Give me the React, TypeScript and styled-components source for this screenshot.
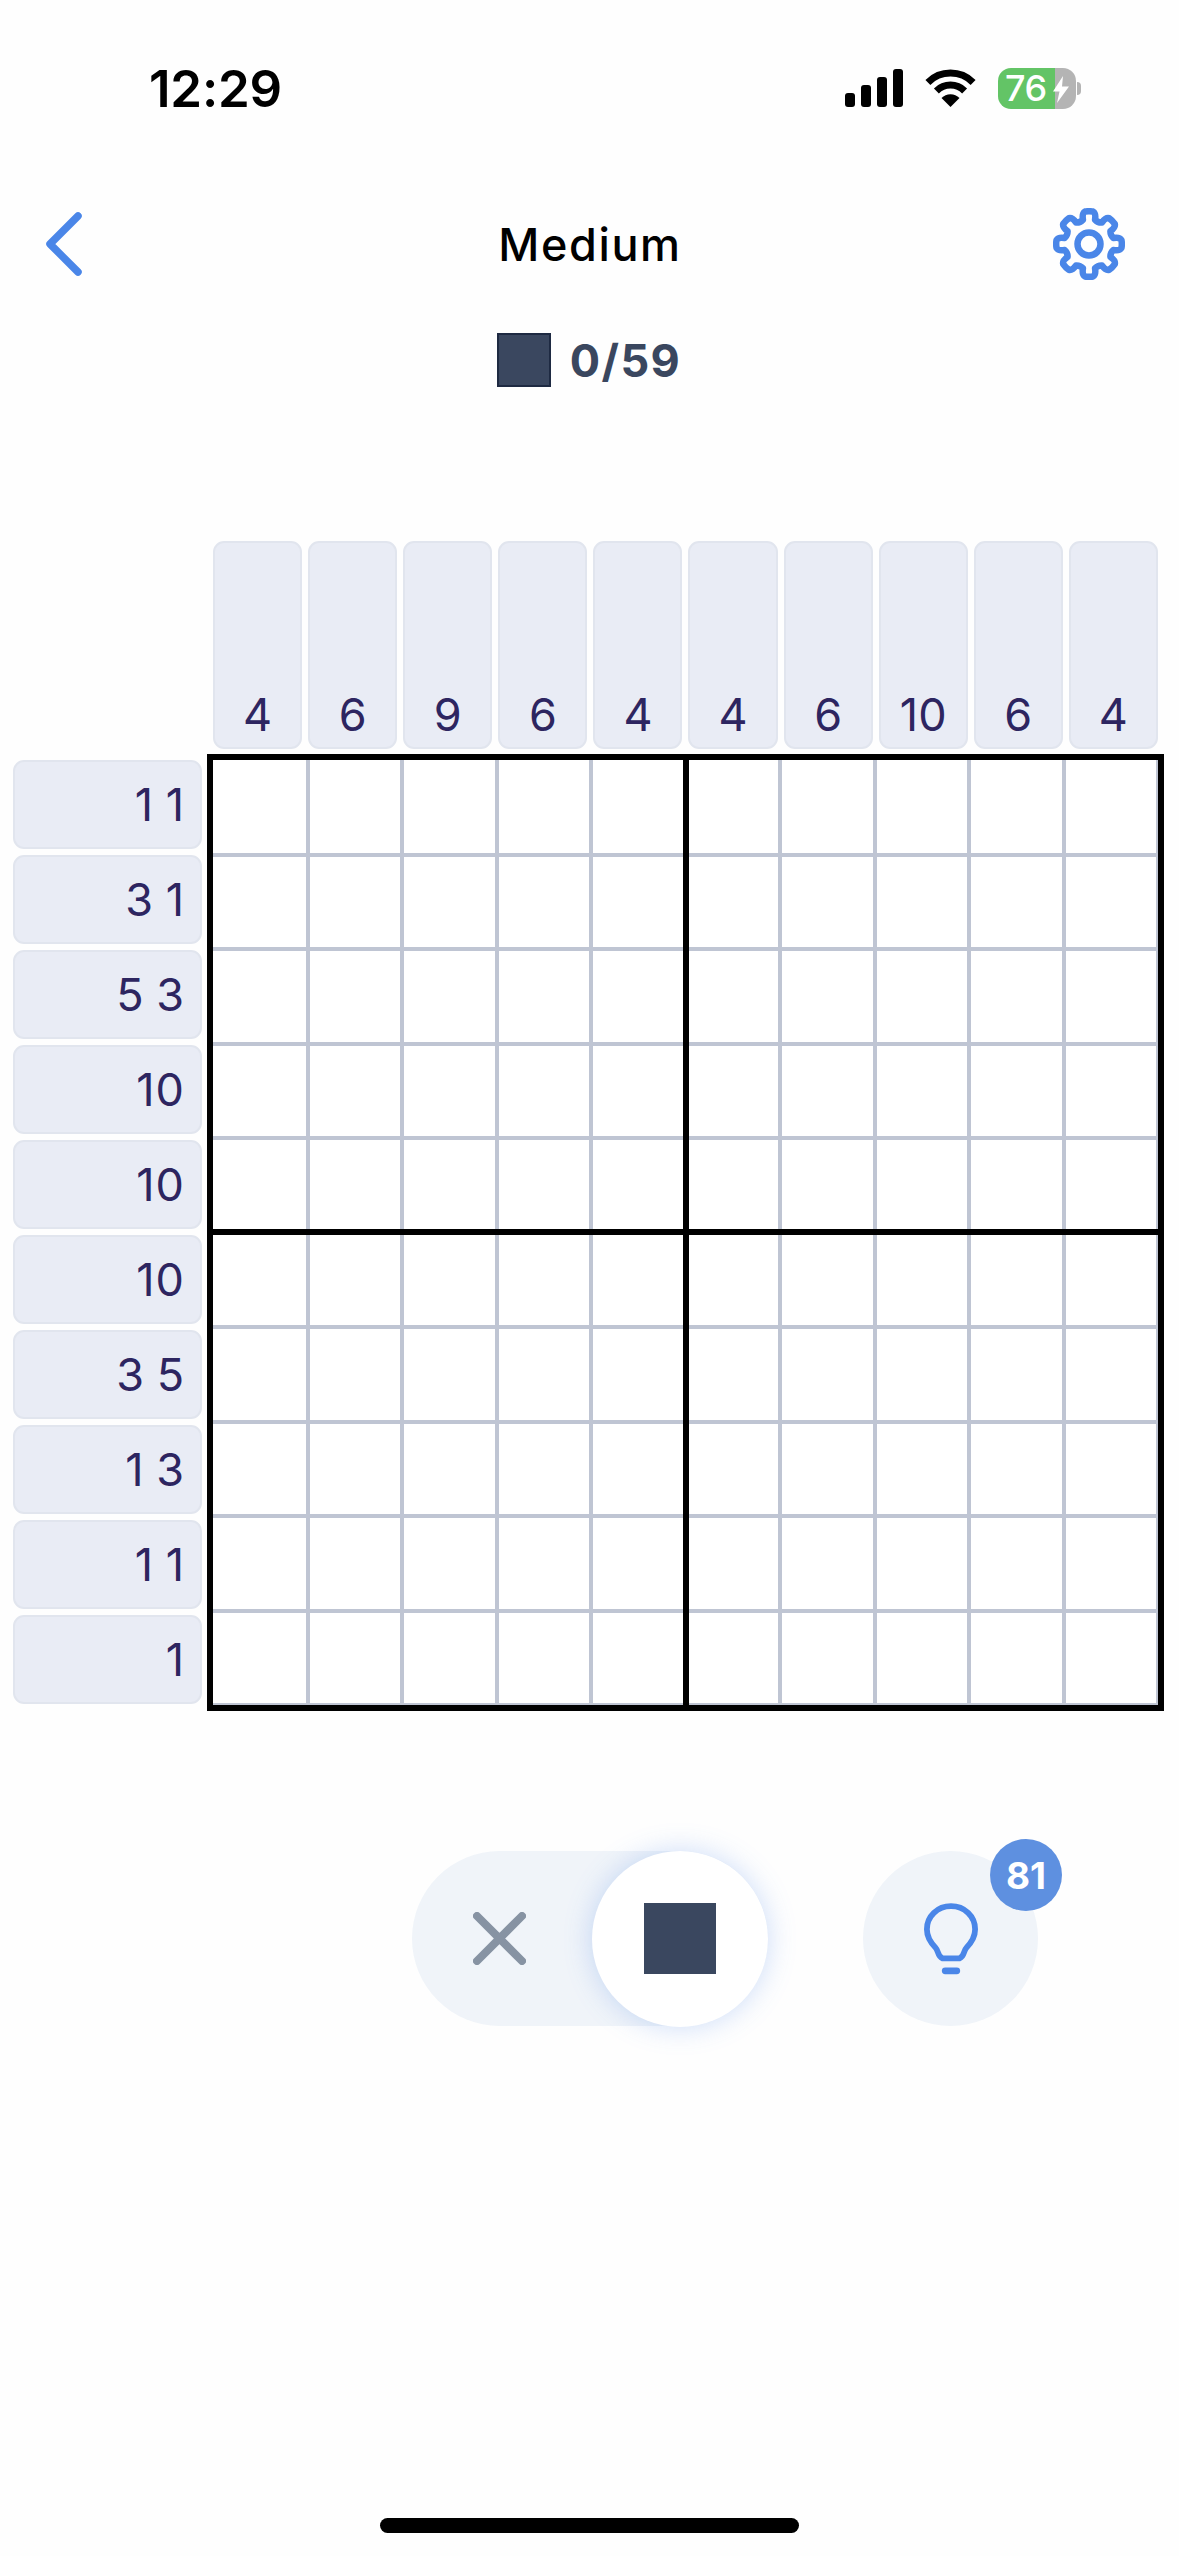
import React from 'react';
import styled, { createGlobalStyle } from 'styled-components';

const GlobalStyle = createGlobalStyle`
  html, body {
    margin: 0;
    padding: 0;
    background: #fff;
  }
  * {
    box-sizing: border-box;
  }
`;

const Page = styled.div`
  width: 1179px;
  height: 2556px;
  display: flex;
  flex-direction: column;
  background: #fefefe;
  font-family: Inter, "Liberation Sans", sans-serif;
  overflow: hidden;
`;

const StatusBar = styled.div`
  height: 64px;
  margin-top: 56px;
  padding: 0 98px 0 149px;
  display: flex;
  align-items: center;
  justify-content: space-between;
`;

const Time = styled.div`
  font-size: 51px;
  font-weight: 600;
  letter-spacing: -0.2px;
  color: #000;
`;

const StatusIcons = styled.div`
  display: flex;
  align-items: center;
  gap: 22px;
`;

const Battery = styled.div`
  position: relative;
  width: 78px;
  height: 41px;
  border-radius: 13px;
  background: linear-gradient(90deg, #63c466 0 57px, #b4b4b4 57px);
  color: #fff;
  font-size: 36px;
  font-weight: 500;
  line-height: 41px;
  padding-left: 7px;
  letter-spacing: -0.5px;
`;

const BatteryWrap = styled.div`
  display: flex;
  align-items: center;
  gap: 1px;
`;

const BatteryNub = styled.div`
  width: 4px;
  height: 13px;
  background: #b4b4b4;
  border-radius: 0 6px 6px 0;
`;

const Bolt = styled.svg`
  position: absolute;
  top: 8px;
  left: 55px;
`;

const NavBar = styled.div`
  height: 88px;
  margin-top: 80px;
  padding: 0 54px 0 45px;
  display: grid;
  grid-template-columns: 1fr auto 1fr;
  align-items: center;
`;

const NavRight = styled.div`
  display: flex;
  justify-content: flex-end;
`;

const Title = styled.div`
  margin-left: 10px;
  font-size: 45px;
  font-weight: 500;
  letter-spacing: 1.6px;
  color: #000;
`;

const Counter = styled.div`
  height: 54px;
  margin-top: 45px;
  padding-right: 1px;
  display: flex;
  align-items: center;
  justify-content: center;
  gap: 19px;
`;

const CounterSwatch = styled.div`
  width: 54px;
  height: 54px;
  background: #3a475f;
  border: 2px solid #1e2a42;
`;

const CounterText = styled.div`
  font-size: 45px;
  font-weight: 700;
  letter-spacing: 1.4px;
  color: #3a475f;
`;

const Puzzle = styled.div`
  margin-top: 154px;
  display: grid;
  grid-template-columns: 207px 957px;
  grid-template-rows: 213px 957px;
`;

const Corner = styled.div``;

const TopClues = styled.div`
  padding: 0 6px 5px 6px;
  display: flex;
  gap: 6px;
`;

const LeftClues = styled.div`
  padding: 6px 5px 7px 13px;
  display: flex;
  flex-direction: column;
  gap: 6px;
`;

const ClueTile = styled.div`
  flex: 1;
  display: flex;
  background: #e9ecf5;
  border: 2px solid #e1e5ee;
  border-radius: 11px;
  color: #2d2560;
  font-size: 45px;
  line-height: 1;
`;

const TopTile = styled(ClueTile)`
  align-items: flex-end;
  justify-content: center;
  padding-bottom: 10px;
`;

const LeftTile = styled(ClueTile)`
  align-items: center;
  justify-content: flex-end;
  padding-right: 15px;
  letter-spacing: 1px;
  word-spacing: -2px;
`;

const Board = styled.div`
  position: relative;
  border: 6px solid #000;
  display: grid;
  grid-template-columns: 96.5px repeat(8, 94.5px) 1fr;
  grid-template-rows: 96.5px repeat(8, 94.5px) 1fr;
  background: #fff;
`;

const Cell = styled.div`
  border-right: 4px solid #bfc5d3;
  border-bottom: 4px solid #bfc5d3;
  &:nth-child(10n) {
    border-right-width: 2px;
  }
  &:nth-child(n + 91) {
    border-bottom-width: 2px;
  }
`;

const VerticalRule = styled.div`
  position: absolute;
  top: 0;
  bottom: 0;
  left: 470px;
  width: 6px;
  background: #000;
`;

const HorizontalRule = styled.div`
  position: absolute;
  left: 0;
  right: 0;
  top: 469px;
  height: 6px;
  background: #000;
`;

const Controls = styled.div`
  margin-top: 140px;
  padding-left: 412px;
  display: flex;
  align-items: center;
  gap: 95px;
`;

const ModeToggle = styled.div`
  position: relative;
  width: 356px;
  height: 175px;
  border-radius: 88px;
  background: #f0f4f9;
  display: flex;
  align-items: center;
  justify-content: space-between;
  padding-left: 61px;
`;

const ToggleThumb = styled.div`
  width: 176px;
  height: 176px;
  border-radius: 50%;
  background: #fff;
  box-shadow: 0 0 28px rgba(74, 134, 232, 0.28);
  display: flex;
  align-items: center;
  justify-content: center;
`;

const ThumbSquare = styled.div`
  width: 72px;
  height: 71px;
  background: #3a475f;
`;

const HintButton = styled.div`
  position: relative;
  width: 175px;
  height: 175px;
  border-radius: 50%;
  background: #f0f4f9;
  display: flex;
  align-items: center;
  justify-content: center;
`;

const HintBadge = styled.div`
  position: absolute;
  top: -12px;
  right: -24px;
  width: 72px;
  height: 72px;
  border-radius: 50%;
  background: #5e90e0;
  color: #fff;
  font-size: 37px;
  font-weight: 700;
  display: flex;
  align-items: center;
  justify-content: center;
`;

const HomeIndicator = styled.div`
  width: 419px;
  height: 15px;
  margin: auto auto 23px;
  border-radius: 8px;
  background: #000;
`;

const topClues = ['4', '6', '9', '6', '4', '4', '6', '10', '6', '4'];
const leftClues = ['1 1', '3 1', '5 3', '10', '10', '10', '3 5', '1 3', '1 1', '1'];

const gearPath = () => {
  const cx = 36;
  const cy = 36;
  const point = (r: number, deg: number) => {
    const rad = (deg * Math.PI) / 180;
    return `${(cx + r * Math.cos(rad)).toFixed(2)} ${(cy + r * Math.sin(rad)).toFixed(2)}`;
  };
  let d = '';
  for (let i = 0; i < 8; i++) {
    const a = i * 45 - 90;
    d += `${i === 0 ? 'M' : 'L'}${point(25, a - 14)} `;
    d += `Q${point(31.5, a - 13)} ${point(32.7, a - 7)} `;
    d += `Q${point(33.2, a)} ${point(32.7, a + 7)} `;
    d += `Q${point(31.5, a + 13)} ${point(25, a + 14)} `;
    d += `Q${point(23, a + 22.5)} ${point(25, a + 31)} `;
  }
  return d + 'Z';
};

const SignalIcon = () => (
  <svg width="58" height="38" viewBox="0 0 58 38" fill="#000">
    <rect x="0" y="24" width="10" height="14" rx="3" />
    <rect x="16" y="16" width="10" height="22" rx="3" />
    <rect x="32" y="8" width="10" height="30" rx="3" />
    <rect x="48" y="0" width="10" height="38" rx="3" />
  </svg>
);

const WifiIcon = () => (
  <svg width="51" height="38" viewBox="0 0 51 38" fill="none" stroke="#000" strokeWidth="7">
    <path d="M2.9 13.4A32 32 0 0 1 48.1 13.4" />
    <path d="M11.4 21.9A20 20 0 0 1 39.6 21.9" />
    <path d="M25.5 38L16.5 29A12.5 12.5 0 0 1 34.5 29Z" fill="#000" stroke="none" />
  </svg>
);

const BackIcon = () => (
  <svg width="38" height="64" viewBox="0 0 38 64" fill="none" stroke="#4a86e8" strokeWidth="7.5" strokeLinecap="round" strokeLinejoin="round">
    <path d="M33 4L5 32L33 60" />
  </svg>
);

const GearIcon = () => (
  <svg width="72" height="72" viewBox="0 0 72 72" fill="none" stroke="#4a86e8" strokeWidth="6.5" strokeLinejoin="round">
    <path d={gearPath()} />
    <circle cx="36" cy="36" r="11.5" />
  </svg>
);

const CrossIcon = () => (
  <svg width="53" height="53" viewBox="0 0 53 53" fill="none" stroke="#8793a3" strokeWidth="8" strokeLinecap="round">
    <path d="M4 4L49 49M49 4L4 49" />
  </svg>
);

const BulbIcon = () => (
  <svg width="54" height="72" viewBox="0 0 56 74" fill="none" stroke="#4a86e8" strokeWidth="6" strokeLinecap="round" strokeLinejoin="round">
    <path d="M28 3C14 3 3 13.500 3 27C3 35 7 41 12 46C15 49 14 55 19 57H37C42 55 41 49 44 46C49 41 53 35 53 27C53 13.500 42 3 28 3Z" />
    <path d="M22 70H34" strokeWidth="7" />
  </svg>
);

const App: React.FC = () => {
  return (
    <Page>
      <GlobalStyle />
      <StatusBar>
        <Time>12:29</Time>
        <StatusIcons>
          <SignalIcon />
          <WifiIcon />
          <BatteryWrap>
            <Battery>
              76
              <Bolt width="16" height="27" viewBox="0 0 16 27" fill="#fff">
                <path d="M10 0L0 15.500H6.500L4 27L16 10.500H9Z" />
              </Bolt>
            </Battery>
            <BatteryNub />
          </BatteryWrap>
        </StatusIcons>
      </StatusBar>

      <NavBar>
        <BackIcon />
        <Title>Medium</Title>
        <NavRight>
          <GearIcon />
        </NavRight>
      </NavBar>

      <Counter>
        <CounterSwatch />
        <CounterText>0/59</CounterText>
      </Counter>

      <Puzzle>
        <Corner />
        <TopClues>
          {topClues.map((clue, i) => (
            <TopTile key={i}>{clue}</TopTile>
          ))}
        </TopClues>
        <LeftClues>
          {leftClues.map((clue, i) => (
            <LeftTile key={i}>{clue}</LeftTile>
          ))}
        </LeftClues>
        <Board>
          {Array.from({ length: 100 }, (_, i) => (
            <Cell key={i} />
          ))}
          <VerticalRule />
          <HorizontalRule />
        </Board>
      </Puzzle>

      <Controls>
        <ModeToggle>
          <CrossIcon />
          <ToggleThumb>
            <ThumbSquare />
          </ToggleThumb>
        </ModeToggle>
        <HintButton>
          <BulbIcon />
          <HintBadge>81</HintBadge>
        </HintButton>
      </Controls>

      <HomeIndicator />
    </Page>
  );
};

export default App;
